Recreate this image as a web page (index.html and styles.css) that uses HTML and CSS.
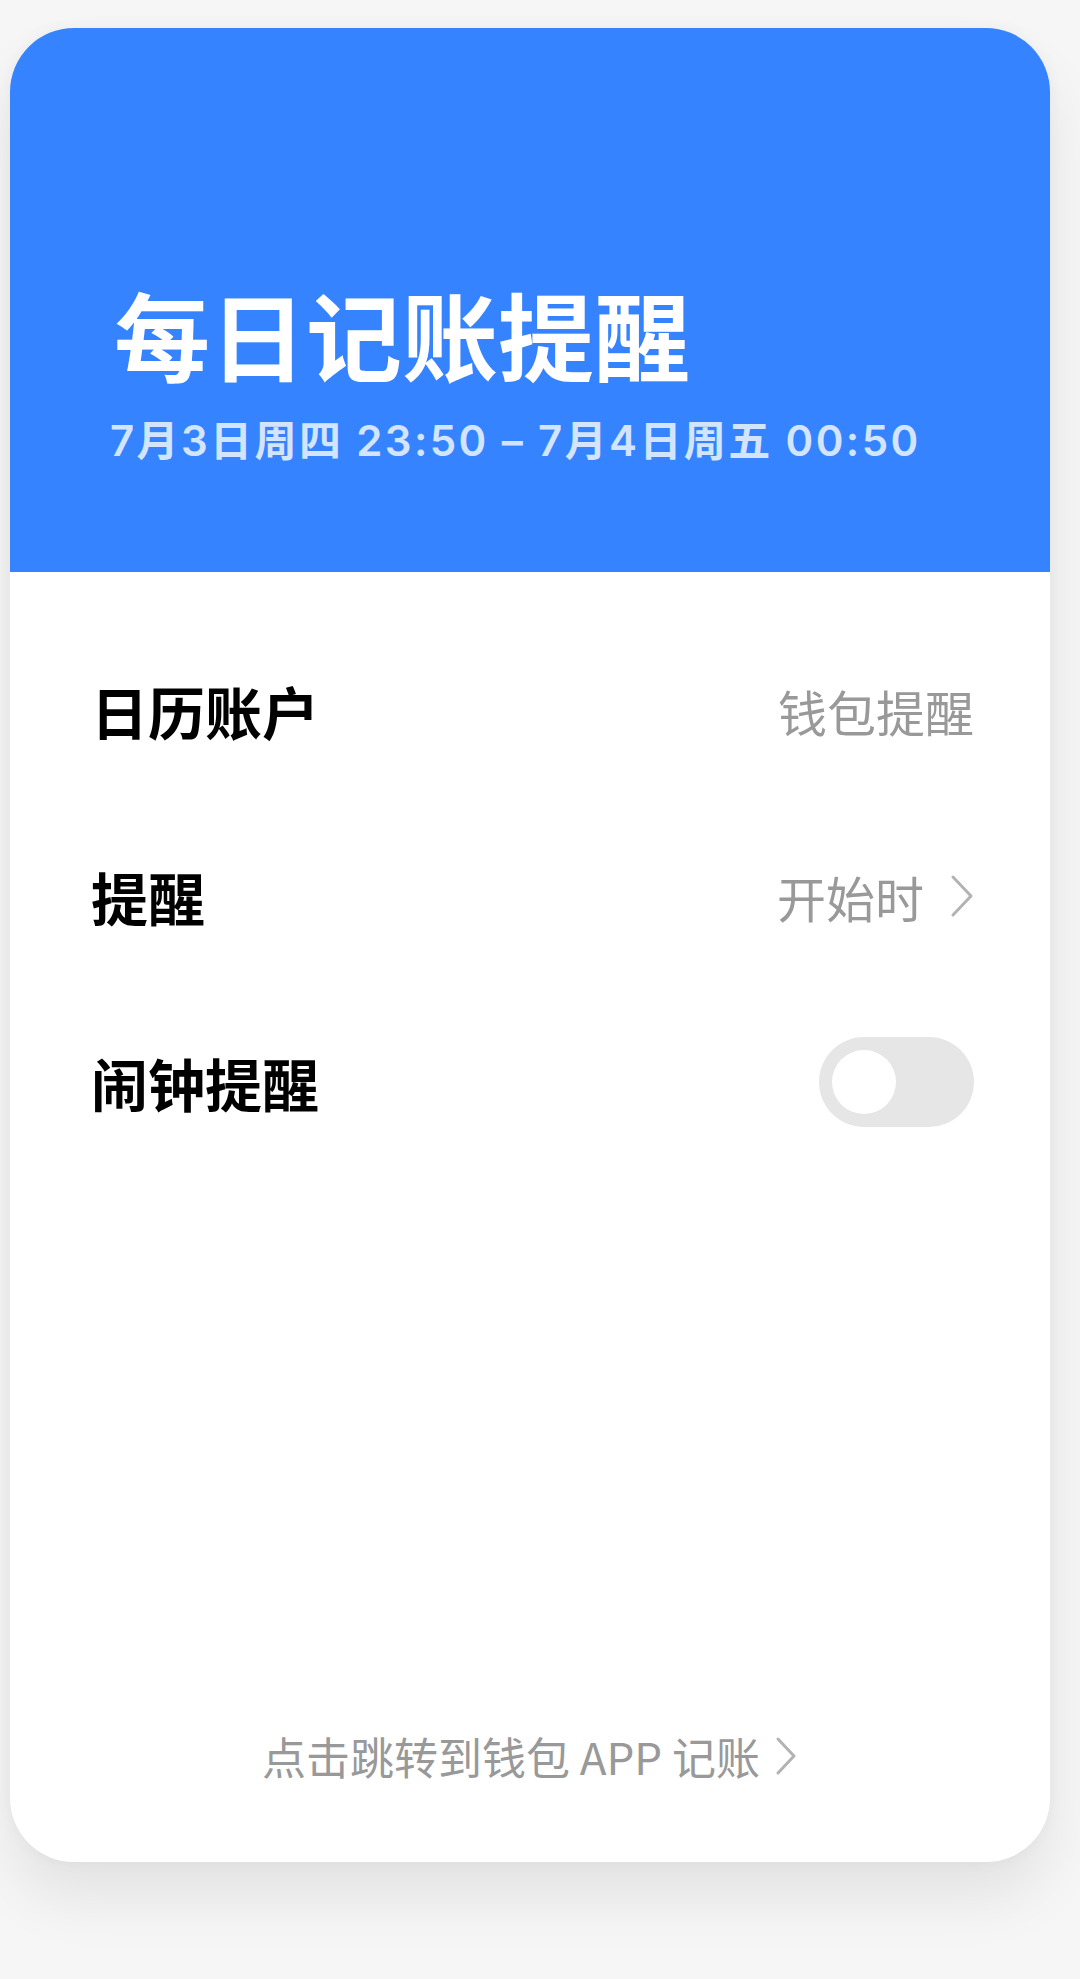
FILE: index.html
```html
<!DOCTYPE html>
<html lang="zh-CN">
<head>
    <meta charset="UTF-8">
    <meta name="viewport" content="width=device-width, initial-scale=1.0">
    <title>每日记账提醒</title>
    <link rel="stylesheet" href="styles.css">
</head>
<body>
    <div class="card">
        <div class="card-header">
            <h1 class="title">每日记账提醒</h1>
            <div class="subtitle">7月3日周四 23:50 – 7月4日周五 00:50</div>
        </div>

        <div class="card-body">
            <div class="row">
                <span class="row-label">日历账户</span>
                <span class="row-value">钱包提醒</span>
            </div>
            <div class="row">
                <span class="row-label">提醒</span>
                <span class="row-value">开始时
                    <svg class="chevron" width="24" height="44" viewBox="0 0 24 44">
                        <polyline points="3,3 21,22 3,41" fill="none" stroke="#b3b3b3" stroke-width="3" stroke-linecap="round" stroke-linejoin="round"/>
                    </svg>
                </span>
            </div>
            <div class="row">
                <span class="row-label">闹钟提醒</span>
                <span class="switch"><span class="switch-knob"></span></span>
            </div>
        </div>

        <div class="card-footer">
            <span>点击跳转到钱包 APP 记账</span>
            <svg class="chevron" width="24" height="40" viewBox="0 0 24 40">
                <polyline points="4,3 20,20 4,37" fill="none" stroke="#b3b3b3" stroke-width="3" stroke-linecap="round" stroke-linejoin="round"/>
            </svg>
        </div>
    </div>
</body>
</html>
```

FILE: styles.css
```css
body {
    margin: 0;
    padding: 28px 30px 0 10px;
    background-color: #f6f6f6;
    font-family: "Noto Sans CJK SC", "Noto Sans", sans-serif;
    height: 1979px;
    box-sizing: border-box;
    overflow: hidden;
}

.card {
    height: 1834px;
    display: flex;
    flex-direction: column;
    background-color: #fff;
    border-radius: 64px;
    overflow: hidden;
    box-shadow: 0 36px 60px rgba(0, 0, 0, 0.08), 0 0 16px rgba(0, 0, 0, 0.04);
}

.card-header {
    height: 544px;
    box-sizing: border-box;
    padding: 250px 0 0 104px;
    background-color: #3583fe;
}

.title {
    margin: 0;
    color: #fff;
    font-size: 96px;
    font-weight: bold;
    line-height: 110px;
}

.subtitle {
    margin-top: -2px;
    margin-left: -4px;
    color: #d3e4ff;
    font-family: Inter, "Noto Sans CJK SC", sans-serif;
    font-size: 42px;
    font-weight: 600;
    letter-spacing: 2.4px;
    line-height: 110px;
}

.card-body {
    padding: 45px 76px 0 81px;
}

.row {
    height: 186px;
    display: flex;
    align-items: center;
    justify-content: space-between;
}

.row-label {
    color: #000;
    font-size: 57px;
    font-weight: bold;
}

.row-value {
    display: flex;
    align-items: center;
    gap: 26px;
    color: #999;
    font-size: 49px;
}

.switch {
    width: 155px;
    height: 90px;
    box-sizing: border-box;
    padding: 13px;
    border-radius: 45px;
    background-color: #e6e6e6;
}

.switch-knob {
    display: block;
    width: 64px;
    height: 64px;
    border-radius: 50%;
    background-color: #fff;
}

.card-footer {
    margin-top: auto;
    padding-bottom: 80px;
    display: flex;
    align-items: center;
    justify-content: center;
    gap: 14px;
    color: #999;
    font-size: 44px;
    line-height: 52px;
}
```
